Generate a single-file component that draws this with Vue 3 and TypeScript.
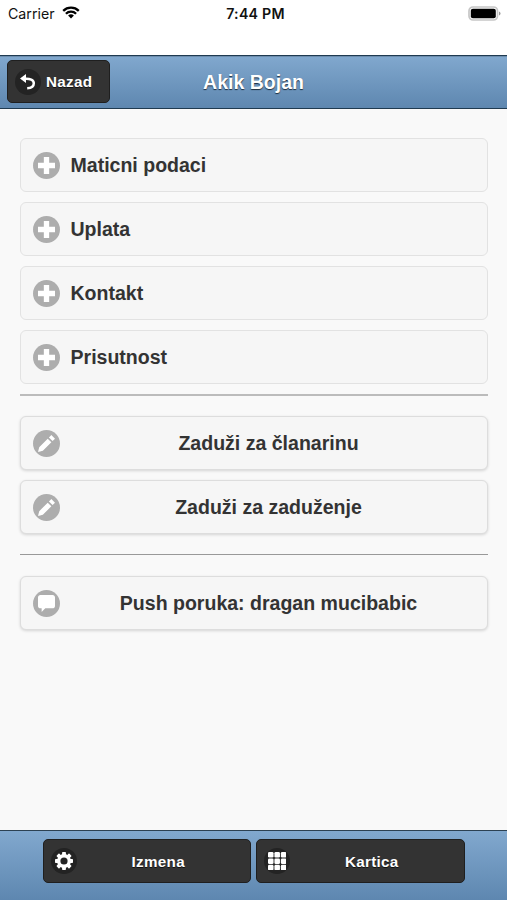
<script setup lang="ts">
interface Action {
  label: string
  icon: 'edit' | 'comment'
}

const sections: string[] = ['Maticni podaci', 'Uplata', 'Kontakt', 'Prisutnost']
const charges: Action[] = [
  { label: 'Zaduži za članarinu', icon: 'edit' },
  { label: 'Zaduži za zaduženje', icon: 'edit' },
]
const messages: Action[] = [{ label: 'Push poruka: dragan mucibabic', icon: 'comment' }]
const groups: Action[][] = [charges, messages]

const paths: Record<Action['icon'], string> = {
  edit: 'M1,10l-1,4l4-1l7-7L8,3L1,10z M11,0L9,2l3,3l2-2L11,0z',
  comment:
    'M12,0H2C0.9,0,0,0.9,0,2v7c0,1.1,0.9,2,2,2h1v3l3-3h6c1.1,0,2-0.9,2-2V2C14,0.9,13.1,0,12,0z',
}
const teeth = [0, 45, 90, 135, 180, 225, 270, 315]
const cells = [0, 5, 10]
</script>

<template>
  <div class="screen">
    <div class="status">
      <div class="carrier">
        <span>Carrier</span>
        <svg class="wifi" viewBox="0 0 18 13">
          <path d="M1.2 4.8a11.2 11.2 0 0 1 15.6 0" />
          <path d="M3.9 7.7a7.3 7.3 0 0 1 10.2 0" />
          <path class="fill" d="M9 12.6l-2.9-3a4.1 4.1 0 0 1 5.8 0z" />
        </svg>
      </div>
      <span class="time">7:44 PM</span>
      <svg class="battery" viewBox="0 0 33 15">
        <rect x="1" y="1" width="28.5" height="13" rx="4" fill="#fff" stroke="#c6c6c6" stroke-width="1.7" />
        <rect x="2.8" y="2.8" width="25" height="9.5" rx="2" fill="#000" />
        <path d="M31 5.5q1.5 .6 1.5 2t-1.5 2z" fill="#999" />
      </svg>
    </div>

    <header class="header">
      <button class="dark back">
        <span class="disc">
          <svg class="undo" viewBox="0 0 16 16">
            <path class="head" d="M6 0v9L0 4.6z" />
            <path class="tail" d="M4.5 4.7C10 4.3 13.8 5.8 13.8 9.2c0 3.2-3 4.9-6.6 5.1" />
          </svg>
        </span>
        <span>Nazad</span>
      </button>
      <h1>Akik Bojan</h1>
    </header>

    <main class="content">
      <div class="stack">
        <div v-for="name in sections" :key="name" class="row">
          <span class="badge">
            <svg viewBox="0 0 14 14"><path d="M4.8 0h4.4v4.8H14v4.4H9.200V14H4.800V9.200H0V4.800h4.800z" /></svg>
          </span>
          <span>{{ name }}</span>
        </div>
      </div>
      <template v-for="(group, i) in groups" :key="i">
        <hr :class="{ thick: i === 0 }" />
        <div class="stack">
          <button v-for="item in group" :key="item.label" class="row action">
            <span class="badge">
              <svg viewBox="0 0 14 14"><path :d="paths[item.icon]" /></svg>
            </span>
            <span class="label">{{ item.label }}</span>
          </button>
        </div>
      </template>
    </main>

    <footer class="footer">
      <button class="dark wide">
        <span class="disc">
          <svg class="gear" viewBox="-7 -7 14 14">
            <rect v-for="a in teeth" :key="a" x="-1.5" y="-7" width="3" height="3.5" rx=".6" :transform="`rotate(${a})`" />
            <circle r="4.1" fill="none" stroke="#fff" stroke-width="2.6" />
          </svg>
        </span>
        <span class="label">Izmena</span>
      </button>
      <button class="dark wide">
        <span class="disc">
          <svg class="grid" viewBox="0 0 14 14">
            <template v-for="y in cells" :key="y">
              <rect v-for="x in cells" :key="x" :x="x" :y="y" width="4.3" height="4.3" rx="1" />
            </template>
          </svg>
        </span>
        <span class="label">Kartica</span>
      </button>
    </footer>
  </div>
</template>

<style>
body {
  background: #f9f9f9;
}
</style>

<style scoped>
.screen {
  display: flex;
  flex-direction: column;
  height: 900px;
  overflow: hidden;
  background: #f9f9f9;
  color: #333;
  font-family: 'Liberation Sans', Arial, sans-serif;
}
.screen * {
  box-sizing: border-box;
}
button {
  margin: 0;
  font-family: inherit;
  cursor: pointer;
}
svg {
  display: block;
}
.status {
  display: grid;
  grid-template-columns: 1fr auto 1fr;
  align-items: center;
  flex: none;
  height: 55px;
  padding: 0 6px 28px 8px;
  background: #fff;
  color: #111;
  font-family: Inter, sans-serif;
  font-size: 14.2px;
}
.carrier {
  display: flex;
  align-items: center;
  gap: 7px;
}
.wifi {
  width: 18px;
  height: 13px;
  margin-top: -2px;
  fill: none;
  stroke: #000;
  stroke-width: 2.3;
}
.wifi .fill {
  fill: #000;
  stroke: none;
}
.time {
  margin-left: 2px;
  font-weight: 600;
  letter-spacing: 0.25px;
}
.battery {
  justify-self: end;
  width: 33px;
  height: 15px;
  margin-top: -1px;
}
.header {
  display: grid;
  grid-template-columns: 103px 1fr 103px;
  align-items: center;
  flex: none;
  height: 54px;
  padding: 0 7px;
  border-top: 1px solid #1f3a50;
  border-bottom: 1px solid #1f3a50;
  box-shadow: inset 0 1px #6d8dad;
  background: linear-gradient(#81a8ce, #5e87b0);
}
h1 {
  margin: 0;
  text-align: center;
  color: #fff;
  font-size: 19.5px;
  line-height: 24px;
  text-shadow: 0 1px 1px #1c2c3c;
}
.dark {
  display: flex;
  align-items: center;
  height: 43.5px;
  padding: 0 7px;
  border: 1px solid #1f1f1f;
  border-radius: 5px;
  background: #333;
  color: #fff;
  font-size: 15.2px;
  font-weight: 700;
  letter-spacing: 0.3px;
  text-shadow: 0 1px 0 #111;
}
.back {
  gap: 5px;
  margin-top: -1px;
}
.disc,
.badge {
  display: grid;
  place-items: center;
  flex: none;
  border-radius: 50%;
}
.disc {
  width: 26px;
  height: 26px;
  background: #232323;
}
.disc svg {
  width: 18px;
  height: 18px;
  fill: #fff;
}
.disc .undo {
  width: 16px;
  height: 16px;
}
.undo .tail {
  fill: none;
  stroke: #fff;
  stroke-width: 2.5;
}
.content {
  flex: 1;
  padding: 29px 19.5px 0 20px;
}
.stack {
  display: flex;
  flex-direction: column;
  gap: 10px;
}
.row {
  display: flex;
  align-items: center;
  gap: 11px;
  height: 54px;
  padding: 0 11px 0 11.5px;
  border: 1.5px solid #e2e2e2;
  border-radius: 6px;
  background: #f6f6f6;
  color: #333;
  font-size: 19.55px;
  font-weight: 700;
  text-shadow: 0 1px 0 #f3f3f3;
}
.action {
  width: 100%;
  padding-right: 20px;
  border-color: #ddd;
  box-shadow: 0 1px 3px rgba(0, 0, 0, 0.15);
}
.label {
  flex: 1;
  text-align: center;
}
.badge {
  width: 27px;
  height: 27px;
  background: #adadad;
}
.badge svg {
  width: 17px;
  height: 17px;
  fill: #fff;
}
hr {
  height: 1px;
  margin: 20px 0 21px;
  border: 0;
  background: #999;
}
hr.thick {
  height: 2px;
  margin: 10px 0 20px;
  background: #bcbcbc;
}
.footer {
  display: flex;
  justify-content: center;
  gap: 5px;
  flex: none;
  height: 70px;
  padding-top: 8px;
  border-top: 1px solid #2c4152;
  background: linear-gradient(#81a8ce, #5e87b0);
}
.wide {
  width: 208.5px;
}
.wide .label {
  padding: 2px 3px 0 0;
}
</style>
